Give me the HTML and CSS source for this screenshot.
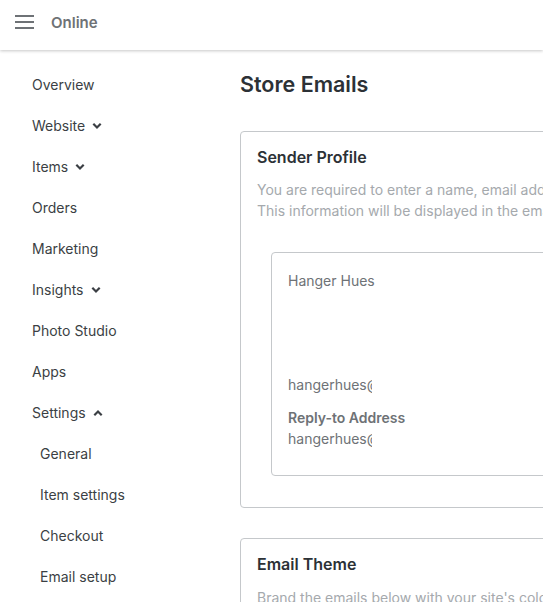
FILE: index.html
```
<!DOCTYPE html>
<html>
<head>
<meta charset="utf-8">
<link rel="stylesheet" href="styles.css">
</head>
<body>
<header class="topbar">
  <svg class="burger" width="20" height="16" viewBox="0 0 20 16"><rect x="0" y="1" width="19" height="2" fill="#6e7276"/><rect x="0" y="7" width="19" height="2" fill="#6e7276"/><rect x="0" y="13" width="19" height="2" fill="#6e7276"/></svg>
  <span class="brand">Online</span>
</header>
<div class="layout">
  <nav class="sidebar">
    <div class="nav-item">Overview</div>
    <div class="nav-item">Website <svg class="chev" width="10" height="8" viewBox="0 0 10 8"><path d="M1.3 1.8 L5 5.5 L8.7 1.8" fill="none" stroke="#3b3f44" stroke-width="2.2"/></svg></div>
    <div class="nav-item">Items <svg class="chev" width="10" height="8" viewBox="0 0 10 8"><path d="M1.3 1.8 L5 5.5 L8.7 1.8" fill="none" stroke="#3b3f44" stroke-width="2.2"/></svg></div>
    <div class="nav-item">Orders</div>
    <div class="nav-item">Marketing</div>
    <div class="nav-item">Insights <svg class="chev" width="10" height="8" viewBox="0 0 10 8"><path d="M1.3 1.8 L5 5.5 L8.7 1.8" fill="none" stroke="#3b3f44" stroke-width="2.2"/></svg></div>
    <div class="nav-item">Photo Studio</div>
    <div class="nav-item">Apps</div>
    <div class="nav-item">Settings <svg class="chev" width="10" height="8" viewBox="0 0 10 8"><path d="M1.3 6.2 L5 2.5 L8.7 6.2" fill="none" stroke="#3b3f44" stroke-width="2.2"/></svg></div>
    <div class="nav-item sub">General</div>
    <div class="nav-item sub">Item settings</div>
    <div class="nav-item sub">Checkout</div>
    <div class="nav-item sub">Email setup</div>
  </nav>
  <main class="main">
    <h1 class="title">Store Emails</h1>
    <section class="card">
      <h2 class="card-title">Sender Profile</h2>
      <p class="card-desc">You are required to enter a name, email address and reply-to address for your store emails.<br>This information will be displayed in the emails your customers receive.</p>
      <div class="profile">
        <div class="p-name">Hanger Hues</div>
        <div class="p-email">hangerhues@gmail.com</div>
        <div class="p-label">Reply-to Address</div>
        <div class="p-email reply">hangerhues@gmail.com</div>
      </div>
    </section>
    <section class="card">
      <h2 class="card-title">Email Theme</h2>
      <p class="card-desc">Brand the emails below with your site's colors and logo.</p>
    </section>
  </main>
</div>
</body>
</html>
```
FILE: styles.css
```
html, body {
  margin: 0;
  padding: 0;
  background: #fff;
  overflow: hidden;
  height: 602px;
}
body {
  font-family: Inter, "Noto Sans", sans-serif;
  color: #3b3f44;
}
.topbar {
  height: 50px;
  box-sizing: border-box;
  display: flex;
  align-items: center;
  padding-left: 15px;
  padding-bottom: 6px;
  box-shadow: 0 1px 3px rgba(0,0,0,0.22);
  position: relative;
  z-index: 1;
}
.burger {
  display: block;
  margin-right: 16px;
}
.brand {
  font-size: 15px;
  font-weight: 600;
  color: #6e7276;
}
.layout {
  display: flex;
  padding-top: 14px;
}
.sidebar {
  width: 208px;
  padding-left: 32px;
  flex: none;
}
.nav-item {
  height: 41px;
  display: flex;
  align-items: center;
  font-size: 14px;
  color: #3b3f44;
}
.nav-item.sub {
  padding-left: 8px;
}
.chev {
  margin-left: 7px;
}
.main {
  flex: none;
  width: 640px;
}
.title {
  margin: 0;
  font-size: 21.5px;
  font-weight: 600;
  color: #2c3136;
  line-height: 40px;
}
.card {
  margin-top: 27px;
  border: 1px solid #c5c8cb;
  border-radius: 4px;
  padding: 14px 16px 31px;
  width: 560px;
}
.card + .card {
  margin-top: 30px;
}
.card-title {
  margin: 0;
  font-size: 16px;
  font-weight: 600;
  color: #2c3136;
  line-height: 22px;
}
.card-desc {
  margin: 11px 0 0;
  font-size: 14px;
  line-height: 21px;
  color: #a5a9ad;
  white-space: nowrap;
}
.card + .card .card-desc {
  margin-top: 12px;
}
.profile {
  margin: 31px 0 0 14px;
  border: 1px solid #c5c8cb;
  border-radius: 4px;
  padding: 18px 16px 26px;
  font-size: 14px;
  color: #6e7276;
  line-height: 20px;
}
.p-name {
  height: 104px;
}
.p-email {
  width: 84px;
  overflow: hidden;
  white-space: nowrap;
}
.p-label {
  margin-top: 13px;
  font-weight: 600;
}
.p-email.reply {
  margin-top: 1px;
}
```
